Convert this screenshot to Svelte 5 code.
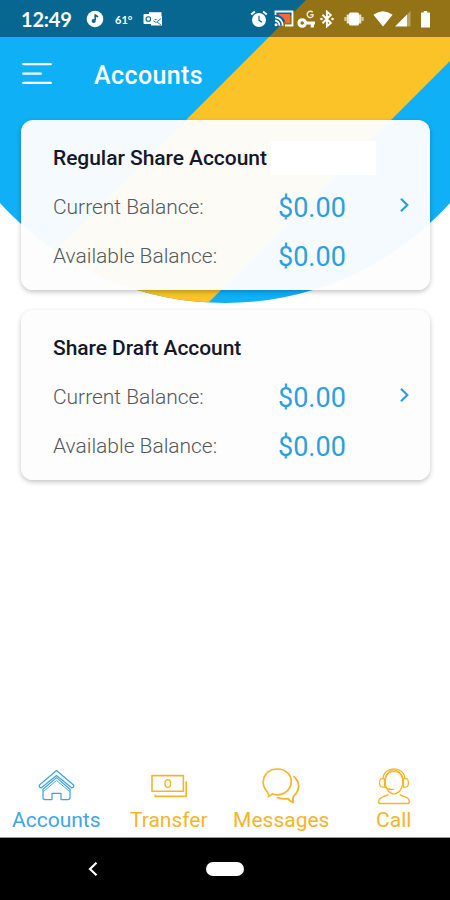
<script>
  const accounts = [
    { name: "Regular Share Account", current: "$0.00", available: "$0.00", masked: true },
    { name: "Share Draft Account", current: "$0.00", available: "$0.00", masked: false },
  ];

  const tabs = [
    { id: "accounts", label: "Accounts" },
    { id: "transfer", label: "Transfer" },
    { id: "messages", label: "Messages" },
    { id: "call", label: "Call" },
  ];

  let active = "accounts";
</script>

<div class="screen">
  <svg class="backdrop" viewBox="0 0 450 303" aria-hidden="true">
    <clipPath id="disc"><circle cx="225" cy="0" r="303" /></clipPath>
    <g clip-path="url(#disc)">
      <rect width="450" height="303" fill="#0fb0f6" />
      <path d="M306 0H511L208 303H3Z" fill="#fbc327" />
    </g>
  </svg>

  <div class="status">
    <span class="clock">12:49</span>
    <svg class="note" width="18" height="18" viewBox="0 0 18 18">
      <circle cx="9" cy="9" r="8.3" fill="#fff" />
      <path d="M9.2 4.2V10M9.2 5L12 7" stroke="#086791" stroke-width="1.6" />
      <circle cx="7.7" cy="11" r="2.1" fill="#086791" />
    </svg>
    <span class="temp">61°</span>
    <svg class="mail" width="20" height="16" viewBox="0 0 20 16">
      <path d="M6 1.2H18.5V8H6Z" fill="#fff" />
      <path d="M8 5L12.5 9L19 5V14.5H8Z" fill="#fff" />
      <path d="M10 9.5L13 11.5L18 7.5M14 11L18 14" fill="none" stroke="#086791" stroke-width="0.8" />
      <rect x="0.5" y="3" width="10" height="10" rx="1" fill="#fff" />
      <circle cx="5.3" cy="8" r="2.3" fill="none" stroke="#086791" stroke-width="1.1" />
    </svg>
    <svg class="alarm" width="18" height="18" viewBox="0 0 18 18">
      <circle cx="9" cy="10" r="7" fill="#fff" />
      <path d="M1.2 4.6L4.9 1.5M16.8 4.6L13.1 1.5" stroke="#fff" stroke-width="2" />
      <path d="M9 5.8V10.3L12 12.2" fill="none" stroke="#086791" stroke-width="1.2" />
    </svg>
    <svg class="cast" width="20" height="18" viewBox="0 0 20 18">
      <path d="M1.5 5V1.5H18.5V15.5H11" fill="none" stroke="#fff" stroke-width="1.8" />
      <path d="M4.5 4H16V13H12Q10 7 4.5 5Z" fill="#f26a3d" />
      <path d="M1 7.3Q8.3 7.8 8.8 15.8M1 10.6Q5.2 11 5.5 15.8" fill="none" stroke="#fff" stroke-width="1.7" />
      <circle cx="2" cy="14.8" r="1.5" fill="#fff" />
    </svg>
    <svg class="key" width="19" height="19" viewBox="0 0 19 19">
      <circle cx="5.2" cy="13" r="3.3" fill="none" stroke="#fff" stroke-width="3" />
      <path d="M8 13H18M15.3 13V17.5" stroke="#fff" stroke-width="3.2" />
      <path d="M15.8 2.3A3.2 3.2 0 1 0 16 6.2V4.8H13.4" fill="none" stroke="#f3ead2" stroke-width="1.4" />
    </svg>
    <svg class="bluetooth" width="14" height="18" viewBox="0 0 14 18">
      <path d="M2.5 4.8L10.8 13L6.9 16.4V1.6L10.8 5L2.5 13.2" fill="none" stroke="#fff" stroke-width="1.9" />
      <circle cx="1.5" cy="9" r="1.3" fill="#fff" /><circle cx="12.5" cy="9" r="1.3" fill="#fff" />
    </svg>
    <svg class="vibrate" width="20" height="16" viewBox="0 0 20 16">
      <rect x="5" y="1.5" width="10" height="13" rx="1.5" fill="#fff" />
      <path d="M3.9 3.5V12.5M16.1 3.5V12.5" stroke="#eee5d0" stroke-width="2.4" />
      <path d="M1.5 6V10M18.5 6V10" stroke="#d6c69e" stroke-width="2.4" />
    </svg>
    <svg class="wifi" width="20" height="16" viewBox="0 0 20 16">
      <path d="M0.4 3.8Q10-3.2 19.6 3.8L10 15.5Z" fill="#fff" />
    </svg>
    <svg class="signal" width="16" height="16" viewBox="0 0 16 16">
      <path d="M0 15.5L12 3.5V15.5Z" fill="#fff" />
      <path d="M12 3.5L15.5 0V15.5H12Z" fill="#b7a16a" />
    </svg>
    <svg class="battery" width="9" height="17" viewBox="0 0 9 17">
      <path d="M2.8 0H6.2V1.6H9V16.5H0V1.6H2.8Z" fill="#fff" />
    </svg>
  </div>

  <header>
    <button class="menu" aria-label="Menu">
      <svg width="30" height="24" viewBox="0 0 30 24">
        <path d="M1.2 2.2H28.8M1.2 11.7H18.8M1.2 20.9H28.8" stroke="#fff" stroke-width="2.3" stroke-linecap="round" />
      </svg>
    </button>
    <h1>Accounts</h1>
  </header>

  <main>
    {#each accounts as account}
      <section class="card">
        <div class="details">
          <h2>
            {account.name}
            {#if account.masked}<span class="mask"></span>{/if}
          </h2>
          <div class="row">
            <span class="label">Current Balance:</span>
            <span class="amount">{account.current}</span>
          </div>
          <div class="row">
            <span class="label">Available Balance:</span>
            <span class="amount">{account.available}</span>
          </div>
        </div>
        <svg class="chevron" width="11" height="16" viewBox="0 0 11 16">
          <path d="M2 1.8L8.3 8L2 14.2" fill="none" stroke="#2b9fe0" stroke-width="2.2" />
        </svg>
      </section>
    {/each}
  </main>

  <nav>
    {#each tabs as tab}
      <button class="tab" class:active={tab.id === active} on:click={() => (active = tab.id)}>
        <svg width="38" height="38" viewBox="0 0 38 38" fill="none" stroke="currentColor" stroke-width="1.25" stroke-linejoin="round" stroke-linecap="round">
          {#if tab.id === "accounts"}
            <path d="M19.5 2.6L2.2 17.2Q1.8 19.6 4.4 19.8L19.5 7.6L34.6 19.8Q37.2 19.6 36.8 17.2Z" />
            <path d="M19.5 9.6L6 21.2V29.6Q6 31.6 8 31.6H15V25.4H24V31.6H31Q33 31.6 33 29.6V21.2Z" />
            <path d="M6.6 23.4L19.5 12.4L32.4 23.4" stroke-width="0.9" />
          {:else if tab.id === "transfer"}
            <rect x="2" y="7.6" width="31.4" height="15.6" stroke-width="1.6" />
            <ellipse cx="17.8" cy="15.4" rx="2.8" ry="3.8" stroke-width="1.4" />
            <path d="M36.2 14V28.4H5.2V27.4" stroke-width="1.6" />
          {:else if tab.id === "messages"}
            <path d="M6.2 28.6C7.6 27.2 6.6 25.8 5.2 23.9C2.1 20.1 1 16.4 1.3 13.4C2 5.4 8.2 1 15.4 1C23.5 1 29.3 6.4 29.3 13.6C29.3 21.4 22.8 26.7 15 26.8Q12.4 26.8 10.2 25.8Q8.8 28.3 6.2 28.6Z" stroke-width="1.7" />
            <path d="M32 8.6C38 14.4 38.4 21.3 32 27.8C30.4 29.4 30.8 31.1 31.2 34.4Q27.8 33.1 25.8 30.6Q20.5 31.5 15.7 29.6" stroke-width="1.8" />
          {:else}
            <ellipse cx="19" cy="14" rx="8.8" ry="12" />
            <path d="M8 10.6C8.4 4.6 13 1 19 1S29.6 4.6 30 10.6M10.3 10C11 5.6 14.4 3.6 19 3.6S27 5.6 27.7 10" />
            <path d="M9.5 10.6H6.8Q4.6 10.6 4.6 14.8T6.8 19H9.5ZM28.5 10.6H31.2Q33.4 10.6 33.4 14.8T31.2 19H28.5ZM9.5 18.6Q12.5 22 18.5 21.4" />
            <path d="M12.8 26.8C8.5 29.5 3.9 28.5 3.6 33.7Q3.6 35.5 5.6 35.5H32.4Q34.4 35.5 34.4 33.7C34.1 28.5 29.5 29.5 25.2 26.8" stroke-width="1.5" />
          {/if}
        </svg>
        <span>{tab.label}</span>
      </button>
    {/each}
  </nav>

  <div class="system">
    <svg class="back" width="10" height="16" viewBox="0 0 10 16">
      <path d="M8.5 1.8L2 8L8.5 14.2" fill="none" stroke="#fff" stroke-width="2.2" />
    </svg>
    <span class="home"></span>
  </div>
</div>

<style>
  :global(body) {
    margin: 0;
  }
  .screen {
    position: relative;
    display: flex;
    flex-direction: column;
    width: 450px;
    height: 900px;
    overflow: hidden;
    background: #fff;
    font-family: Roboto, sans-serif;
  }
  .backdrop {
    position: absolute;
    top: 0;
    left: 0;
    width: 450px;
    height: 303px;
  }
  .status,
  header,
  main,
  nav,
  .system {
    position: relative;
    box-sizing: border-box;
  }
  .status {
    display: flex;
    align-items: center;
    height: 37px;
    padding: 1px 20px 0 21px;
    background: rgba(0, 0, 0, 0.41);
    color: #fff;
  }
  .status svg {
    flex: none;
  }
  .clock {
    width: 65px;
    font-family: Lato, sans-serif;
    font-size: 20px;
    font-weight: 700;
    letter-spacing: -0.2px;
  }
  .temp {
    width: 28px;
    margin-left: 11px;
    font-family: Lato, sans-serif;
    font-size: 11px;
    font-weight: 700;
  }
  .alarm {
    margin-left: auto;
  }
  .cast {
    margin-left: 6px;
  }
  .key {
    margin-left: 3px;
  }
  .bluetooth {
    margin-left: 4px;
  }
  .vibrate {
    margin-left: 10px;
  }
  .wifi {
    margin-left: 9px;
  }
  .signal {
    margin-left: 2px;
  }
  .battery {
    margin-left: 10px;
  }
  header {
    display: flex;
    align-items: center;
    height: 83px;
    padding: 0 22px 9px;
  }
  button {
    padding: 0;
    border: none;
    background: none;
    font: inherit;
    cursor: pointer;
  }
  .menu {
    display: flex;
    width: 72px;
  }
  h1 {
    margin: 2px 0 0;
    color: #fff;
    font-size: 25px;
    font-weight: 500;
    letter-spacing: 0.4px;
  }
  main {
    display: flex;
    flex: 1;
    flex-direction: column;
    gap: 20px;
    padding: 0 20px 0 21px;
  }
  .card {
    display: flex;
    align-items: center;
    justify-content: space-between;
    box-sizing: border-box;
    height: 170px;
    padding: 4px 20px 0 32px;
    border-radius: 12px;
    background: rgba(253, 253, 253, 0.965);
    box-shadow: 0 2px 5px rgba(0, 0, 0, 0.24);
  }
  .details {
    width: 323px;
  }
  h2,
  .row {
    display: flex;
    align-items: center;
    height: 49px;
    margin: 0;
  }
  h2 {
    color: #15172b;
    font-size: 21px;
    font-weight: 500;
    letter-spacing: -0.05px;
    white-space: nowrap;
  }
  .mask {
    width: 105px;
    height: 34px;
    margin: -1px 0 0 auto;
    background: #fff;
  }
  .label {
    width: 225px;
    color: #55585d;
    font-size: 21px;
    font-weight: 300;
    letter-spacing: -0.03px;
  }
  .amount {
    padding-top: 2px;
    color: #2b9fe0;
    font-size: 27px;
  }
  .chevron {
    margin-top: -4px;
  }
  nav {
    display: flex;
    height: 71px;
    border-bottom: 1px solid #999;
  }
  .tab {
    display: flex;
    flex: 1;
    flex-direction: column;
    align-items: center;
    justify-content: flex-start;
    padding-top: 1px;
    color: #f5b52b;
  }
  .tab.active {
    color: #3fa4e8;
  }
  .tab span {
    margin-top: 2px;
    font-size: 21px;
    line-height: 25px;
  }
  .system {
    display: flex;
    align-items: center;
    height: 62px;
    padding-left: 88px;
    background: #000;
  }
  .home {
    width: 38px;
    height: 14px;
    margin-left: 108px;
    border-radius: 7px;
    background: #fff;
  }
</style>
